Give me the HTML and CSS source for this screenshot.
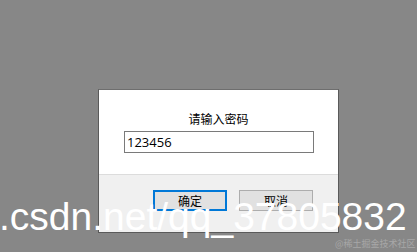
FILE: index.html
```html
<!DOCTYPE html>
<html lang="zh-CN">
<head>
<meta charset="utf-8">
<link rel="stylesheet" href="styles.css">
</head>
<body>
<div class="dialog">
  <div class="top">
    <div class="title">请输入密码</div>
    <div class="input">123456</div>
  </div>
  <div class="bottom">
    <div class="btn primary">确定</div>
    <div class="btn">取消</div>
  </div>
</div>
<div class="wm">.csdn.net/qq_37805832</div>
<div class="wm2">@稀土掘金技术社区</div>
</body>
</html>
```
FILE: styles.css
```css
html, body { margin: 0; padding: 0; }
body {
  width: 417px; height: 252px; overflow: hidden;
  background: #878787;
  position: relative;
  font-family: "Noto Sans CJK SC", sans-serif;
}
.dialog {
  margin: 89px 0 0 98px;
  width: 239px;
  height: 142px;
  border: 1px solid #5a5a5a;
  border-top-color: #6e6e6e;
  display: flex; flex-direction: column;
}
.top {
  background: #fff;
  height: 84px;
  border-bottom: 1px solid #dcdcdc;
  display: flex; flex-direction: column; align-items: center;
}
.title {
  margin-top: 21px;
  font-size: 12px; line-height: 16px; color: #000;
}
.input {
  margin-top: 4px;
  margin-left: 1px;
  width: 186px; height: 20px;
  border: 1px solid #7a7a7a;
  box-sizing: content-box;
  font-family: "Open Sans", "Noto Sans", sans-serif;
  font-size: 13px; line-height: 20px; color: #000;
  padding-left: 2px;
}
.bottom {
  flex: 1;
  background: #f0f0f0;
  display: flex; justify-content: flex-end; gap: 12px;
  padding-top: 15px; padding-right: 25px;
}
.btn {
  width: 72px; height: 19px;
  border: 1px solid #adadad;
  background: #e1e1e1;
  font-size: 12px; line-height: 19px; text-align: center; color: #000;
}
.btn.primary {
  width: 70px; height: 17px; line-height: 17px;
  border: 2px solid #0078d7;
}
.wm {
  position: absolute; left: -1px; top: 194px;
  font-family: "Liberation Sans", Arial, sans-serif;
  font-size: 39px; line-height: 46px; color: #fff;
  white-space: nowrap;
}
.wm2 {
  position: absolute; left: 335px; top: 238px;
  font-size: 9px; line-height: 12px; color: #a8a8a8;
  white-space: nowrap;
}
```
